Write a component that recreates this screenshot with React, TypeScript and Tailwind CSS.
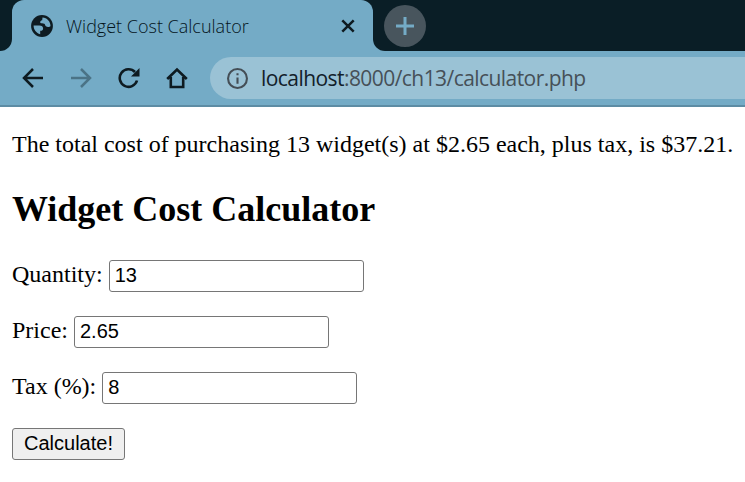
import React from "react";

const ui = "font-['Open_Sans',sans-serif]";

function Field({ label, value, gap }: { label: string; value: string; gap: string }) {
  return (
    <label className={`flex h-8 items-center text-[24px] leading-[28px] ${gap}`}>
      <span className="whitespace-pre pb-1">{label} </span>
      <input
        defaultValue={value}
        className="h-8 w-[255px] rounded-[3px] border border-[#767676] bg-white px-[5px] pb-[2px] font-['Liberation_Sans',Arial,sans-serif] text-[20px] leading-[22px] text-black outline-none"
      />
    </label>
  );
}

export default function App() {
  return (
    <div className="h-[482px] w-[745px] overflow-hidden bg-white">
      <header className={`bg-[#74abc6] ${ui}`}>
        <div className="flex h-[51px]">
          <div className="w-3 rounded-br-[12px] bg-[#0a1e26]" />
          <div className="w-[361px] bg-[linear-gradient(#0a1e26_50%,#74abc6_50%)]">
            <div className="flex h-full items-center rounded-t-[12px] bg-[#74abc6] pl-[19px] pr-[17px]">
              <svg width="22" height="22" viewBox="0 0 22 22" className="shrink-0">
                <circle cx="11" cy="11" r="10.9" fill="#0e1b21" />
                <path d="M11.500 2.600C16 2.900 19.400 6.500 19.500 11c-.8 1.300-3.300 1.500-4.600.3-.8-.7-.7-2.100-1.600-2.600-1.200-.5-3.500.2-4-.9-.5-1.200.4-2.400 1.900-2.600z" fill="#74abc6" />
                <path d="M2.600 10.600h5.800c2.400 0 3.700 1.100 3.700 2.900 0 1.500-.8 2.300-2.900 2.300v3.400C5.300 18.300 2.500 14.900 2.600 10.600z" fill="#74abc6" />
              </svg>
              <span className="ml-[13px] whitespace-nowrap text-[18px] font-light leading-6 text-[#04141b]">Widget Cost Calculator</span>
              <svg width="16" height="16" viewBox="0 0 16 16" className="ml-auto shrink-0" fill="none" stroke="#0e1b21" strokeWidth="2.5">
                <path d="M2.300 2.300l11.400 11.400M13.700 2.300L2.300 13.700" />
              </svg>
            </div>
          </div>
          <div className="flex flex-1 items-center rounded-bl-[12px] bg-[#0a1e26] pl-[11px]">
            <div className="flex size-[42px] items-center justify-center rounded-full bg-[#48555d]">
              <svg width="18" height="18" viewBox="0 0 18 18" stroke="#74abc6" strokeWidth="3">
                <path d="M9 0v18M0 9h18" />
              </svg>
            </div>
          </div>
        </div>
        <div className="flex h-14 items-center border-b-2 border-[#5d8ca4] pl-[22px]">
          <svg width="22" height="20" viewBox="0 0 22 20" fill="none" stroke="#0e1b21" strokeWidth="2.500">
            <path d="M21 10H2.500M11 1L2 10l9 9" />
          </svg>
          <svg width="22" height="20" viewBox="0 0 22 20" className="ml-[27px]" fill="none" stroke="#4b7386" strokeWidth="2.500">
            <path d="M0 10h18.500M10 1l9 9-9 9" />
          </svg>
          <svg width="22" height="22" viewBox="0 0 22 22" className="ml-[25px]" fill="none" stroke="#0e1b21" strokeWidth="2.600">
            <path d="M19 13.500A8.800 8.800 0 1 1 17 5" />
            <path d="M21.500 1v8.500H13z" fill="#0e1b21" stroke="none" />
          </svg>
          <svg width="22" height="22" viewBox="0 0 22 22" className="ml-[26px]" fill="none" stroke="#0e1b21" strokeWidth="2.600">
            <path d="M1.200 12L11 2.500 20.800 12M4.800 10v10h12.400V10" />
          </svg>
          <div className="ml-[22px] flex h-[42px] flex-1 items-center rounded-l-full bg-[#9ac2d5] pl-[17px]">
            <svg width="21" height="21" viewBox="0 0 20 20" className="shrink-0" fill="none" stroke="#444e56" strokeWidth="2">
              <circle cx="10" cy="10" r="9" />
              <path d="M10 9v6M10 5v2" />
            </svg>
            <span className="ml-[13px] whitespace-nowrap text-[21px] leading-7 tracking-[-0.56px] text-[#465058]">
              <span className="text-[#12202a]">localhost</span>:8000/ch13/calculator.php
            </span>
          </div>
        </div>
      </header>
      <main className="px-3 pt-6 font-['Liberation_Serif','Times_New_Roman',serif] text-black">
        <p className="whitespace-nowrap text-[24px] leading-[26px]">
          The total cost of purchasing 13 widget(s) at $2.65 each, plus tax, is $37.21.
        </p>
        <h2 className="mt-8 text-[36px] font-bold leading-[40px]">Widget Cost Calculator</h2>
        <form>
          <Field label="Quantity:" value="13" gap="mt-[31px]" />
          <Field label="Price:" value="2.65" gap="mt-6" />
          <Field label="Tax (%):" value="8" gap="mt-6" />
          <button
            type="button"
            className="mt-6 block h-8 w-[113px] rounded-[3px] border border-[#767676] bg-[#efefef] pb-[2px] font-['Liberation_Sans',Arial,sans-serif] text-[20px] leading-[22px]"
          >
            Calculate!
          </button>
        </form>
      </main>
    </div>
  );
}
